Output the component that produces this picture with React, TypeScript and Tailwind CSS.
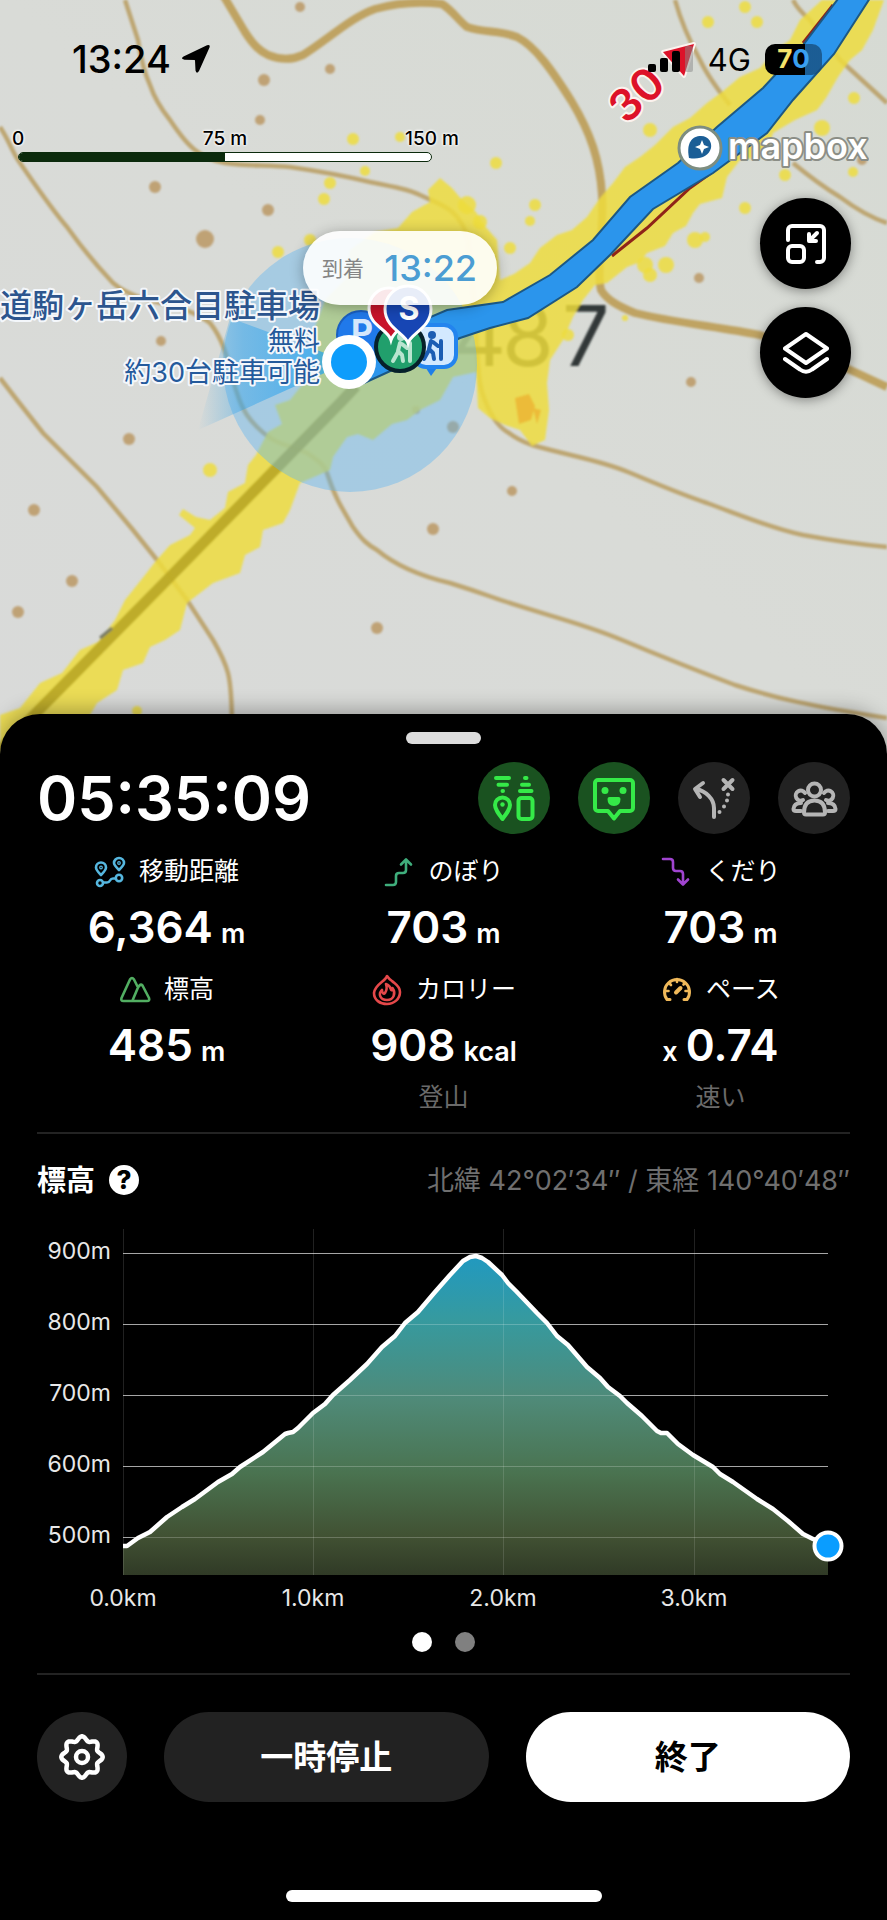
import React from "react";

type StatProps = {
  icon: React.ReactNode;
  label: string;
  value: string;
  unit?: string;
  prefix?: string;
  note?: string;
};

const contours = [
  "M0 127C10 142 12 152 20 163C36 186 50 207 67 227C82 248 97 266 113 283C140 306 180 300 210 323C228 345 230 375 237 393C243 412 250 420 257 427C266 436 272 440 280 443C294 449 302 449 310 455C320 462 325 466 327 473C334 495 340 505 353 527C362 540 368 545 377 550C395 565 420 576 450 583C466 588 478 592 492 597C540 614 580 622 622 640C665 658 695 670 735 685C775 698 810 706 887 718",
  "M125 0L138 40C141 60 144 72 150 85C155 100 162 110 170 120C180 135 186 143 195 150C205 158 213 161 225 163C245 166 268 165 290 167C318 171 345 176 370 182C395 187 410 190 420 195C435 202 443 205 450 210C462 220 466 230 468 240C474 290 476 340 479 375C480 390 483 396 486 403C492 418 500 428 509 433C518 440 524 442 532 445C566 455 600 460 628 472C657 484 680 494 707 503C740 515 770 528 803 535C830 540 855 544 887 547",
  "M0 378L17 400L43 433L97 487L133 530L157 560L187 600L213 640C220 652 225 662 228 673C231 685 232 700 232 730",
  "M675 0C682 25 690 42 700 60C708 77 718 90 730 105M793 163C810 177 825 188 840 197C856 209 872 218 887 223",
  "M793 0C797 8 803 14 810 20L840 60L887 103",
];

const yellowSpecks = [
  [353, 139, 6], [400, 137, 5], [365, 171, 5], [330, 183, 6], [324, 199, 6], [496, 163, 6], [650, 130, 7],
  [745, 7, 6], [757, 22, 6], [708, 22, 6], [854, 98, 6], [785, 175, 6], [853, 172, 5], [745, 208, 6],
  [535, 205, 6], [530, 221, 5], [510, 248, 6], [695, 240, 8], [705, 237, 5], [666, 265, 8], [650, 275, 7],
  [822, 128, 8], [210, 470, 7], [137, 711, 5], [467, 205, 9], [480, 222, 7], [310, 240, 6], [278, 252, 6],
  [568, 335, 6], [625, 318, 3], [645, 265, 8],
];

const brownDots = [
  [300, 7, 5], [264, 80, 6], [330, 69, 5], [260, 120, 5], [155, 187, 6], [268, 210, 6], [205, 239, 9],
  [161, 341, 5], [129, 439, 6], [34, 510, 6], [72, 581, 6], [18, 612, 6], [433, 529, 6], [377, 628, 6],
  [512, 491, 5], [699, 278, 5], [691, 382, 5], [862, 160, 5], [416, 410, 4], [453, 427, 6],
];

const profile =
  "86,326 90,326 101,318 113,312 130,297 145,287 158,279 181,262 195,254 203,247 226,232 248,214 251,213 256,212 261,208 276,193 288,184 296,175 313,160 330,144 345,127 358,116 368,103 381,92 398,72 413,55 426,41 433,37 439,36 445,38 451,42 465,55 471,63 479,71 500,93 510,103 520,116 531,125 550,147 563,158 571,167 583,176 590,183 605,196 620,211 624,213 630,213 641,224 656,235 676,247 683,254 696,262 720,279 736,289 751,301 766,314 776,319 791,326";

const gearPath =
  Array.from({ length: 96 }, (_, i) => {
    const a = (i / 96) * Math.PI * 2;
    const r = 18.6 + 2.1 * Math.cos(8 * a);
    const x = (23 + r * Math.sin(a)).toFixed(1);
    const y = (23 - r * Math.cos(a)).toFixed(1);
    return `${i ? "L" : "M"}${x} ${y}`;
  }).join("") + "Z";

function Hiker() {
  return (
    <g fill="none" strokeLinecap="round" strokeLinejoin="round" strokeWidth="4">
      <circle cx="0" cy="-11" r="2" />
      <path d="M-1 -5L-3 3L1 7L2 13M-3 4L-8 13M1 -4L6 0M9 -5V13" />
    </g>
  );
}

function TrailMap() {
  return (
    <svg
      className="absolute inset-0 h-full w-full"
      viewBox="0 0 887 760"
      preserveAspectRatio="xMidYMin slice"
      fontFamily="Inter, 'Noto Sans CJK JP', sans-serif"
      aria-label="登山ルートの地図"
      role="img"
    >
      <defs>
        <linearGradient id="land" x1="0" y1="1" x2="1" y2="0">
          <stop offset="0" stopColor="#d9dad9" />
          <stop offset="0.5" stopColor="#d9dbd7" />
          <stop offset="1" stopColor="#d6dad3" />
        </linearGradient>
        <linearGradient id="heading" x1="1" y1="0" x2="0" y2="0">
          <stop offset="0" stopColor="#149ff5" stopOpacity="0.75" />
          <stop offset="0.7" stopColor="#2aa0ea" stopOpacity="0.4" />
          <stop offset="1" stopColor="#2aa0ea" stopOpacity="0" />
        </linearGradient>
        <filter id="soft" x="-5%" y="-5%" width="110%" height="110%">
          <feGaussianBlur stdDeviation="1" />
        </filter>
      </defs>
      <rect width="887" height="760" fill="url(#land)" />
      <g filter="url(#soft)">
        <g fill="none" stroke="#bda672" strokeWidth="4.5">
          {contours.map((d) => (
            <path key={d} d={d} />
          ))}
        </g>
        <path
          d="M223 -5L245 32C254 46 260 51 268 55C280 60 292 60 303 55C330 38 350 18 375 9C400 2 425 2 442 4C452 10 458 20 467 27C485 33 500 30 517 37C535 46 552 70 572 102C590 132 600 160 602 195C604 230 596 270 601 290C607 300 618 306 635 313C670 322 720 327 760 335C810 350 850 370 887 387"
          fill="none"
          stroke="#bfa362"
          strokeWidth="8"
        />
        {brownDots.map(([x, y, r]) => (
          <circle key={`${x}-${y}`} cx={x} cy={y} r={r} fill="#b9935c" opacity="0.8" />
        ))}
        <text x="452 502 562" y="366" fontSize="84" fontWeight="400" fill="#333838">
          487
        </text>
        <g fill="#eedd3c" fillOpacity="0.84">
          <path d="M0 715L20 708L40 683L62 673L80 650L98 642L115 620L125 600L145 575L155 562L170 545L190 535L195 528L179 515L183 509L196 517L210 520L225 508L228 492L245 483L248 465L256 455L268 432L282 424L275 405L290 400L302 385L318 365L314 330L325 300L345 280L350 250L375 232L398 228L412 212L430 202L428 190L440 178L452 188L462 200L476 212L484 225L497 240L500 280L514 274L530 263L540 248L557 235L572 230L587 217L600 198L613 183L625 167L640 157L655 145L673 127L690 118L707 103L722 92L740 77L760 68L775 50L790 40L800 20L822 0H884L873 30L862 50L850 60L838 77L826 98L817 110L795 120L773 133L768 150L760 157L740 160L727 177L722 198L700 204L693 213L686 226L673 233L665 246L647 253L640 262L627 267L607 283L595 285L583 300L573 317L563 340L550 360L547 383L549 410L545 440L532 446L520 430L505 425L490 418L478 408L476 372L453 377L440 400L420 410L407 420L392 424L373 440L358 434L347 437L333 457L330 470L300 483L290 510L283 523L263 530L260 547L245 555L240 573L213 583L187 603L180 630L165 640L150 647L143 663L123 670L117 690L97 703L90 715L55 760H0Z" />
          {yellowSpecks.map(([x, y, r]) => (
            <circle key={`${x}-${y}`} cx={x} cy={y} r={r} />
          ))}
        </g>
        <path d="M515 398l14 -4l6 12l-4 14l-12 4zM533 408l8 2l-4 14z" fill="#eda92a" opacity="0.65" />
        <path d="M0 750L37 712L167 580L343 400L356 386" fill="none" stroke="#b09d1f" strokeOpacity="0.75" strokeWidth="11" />
        <path d="M100 638l12 -10" stroke="#777a66" strokeWidth="3" />
      </g>

      <circle cx="350" cy="365" r="127" fill="#5fb6f0" fillOpacity="0.42" />
      <path d="M349 362L230 318L198 430Z" fill="url(#heading)" />

      <path d="M833 5L803 43M718 168L690 188L647 228L612 256" fill="none" stroke="#8f2418" strokeWidth="3" />
      <path
        d="M841 -5L803 45L763 88L717 127L678 163L630 197L593 240L550 275L503 302L447 310L400 330L350 372L362 384L410 362L460 338L490 328L528 318L577 287L610 255L653 209L713 173L767 133L793 100L834 54L872 -5Z"
        fill="#2b95ec"
        stroke="#1c5884"
        strokeWidth="2"
      />

      <g fill="#dd1229" stroke="#fbf3ef" strokeWidth="4" paintOrder="stroke" strokeLinejoin="round">
        <path d="M663 52L694 44L684 76Z" />
        <text transform="translate(637 95) rotate(-43)" y="15" fontSize="44" fontWeight="600" textAnchor="middle">
          30
        </text>
      </g>

      <g stroke="#f4f7fb" strokeWidth="4" paintOrder="stroke" strokeLinejoin="round" textAnchor="end" fill="#245a9c">
        <text x="320" y="317" fontSize="32" fontWeight="500" fill="#2c558e">道駒ヶ岳六合目駐車場</text>
        <text x="320" y="350" fontSize="26">無料</text>
        <text x="320" y="382" fontSize="27">約30台駐車可能</text>
      </g>

      <circle cx="361" cy="335" r="24" fill="#2079ea" stroke="#1a5fc0" strokeWidth="2" />
      <text x="351" y="344" fontSize="34" fontWeight="700" fill="#d4e7fc">P</text>
      <path d="M424 365L431 376L439 365Z" fill="#1f7fe8" />
      <rect x="414" y="325" width="42" height="42" rx="12" fill="#d3e9ff" stroke="#2384ee" strokeWidth="4" />
      <g transform="translate(432 346)" stroke="#1c5db3" fill="#1c5db3">
        <Hiker />
      </g>
      <circle cx="400" cy="347" r="24" fill="#219f6c" stroke="#06202a" strokeWidth="4" />
      <g transform="translate(401 348)" stroke="#b9e5d0">
        <Hiker />
      </g>
      <path d="M391 340C388 329 369 326 369 308a20 20 0 0 1 40 0C409 326 394 330 391 340Z" fill="#c8142a" stroke="#fff" strokeWidth="3" />
      <path d="M408 343C405 333 385 328 385 309a23 23 0 0 1 46 0C431 328 411 333 408 343Z" fill="#1746b4" stroke="#fff" strokeWidth="3" />
      <text x="409" y="320" fontSize="32" fontWeight="700" textAnchor="middle" fill="#fff">S</text>
      <circle cx="349" cy="362" r="27" fill="#fff" />
      <circle cx="349" cy="362" r="18" fill="#0e9dfb" />
    </svg>
  );
}

function StatusBar() {
  return (
    <div className="relative flex h-[118px] items-center justify-between pr-[65px] pl-[72px]">
      <div className="flex items-center gap-[10px]">
        <span className="text-[38px] leading-none font-medium">13:24</span>
        <svg className="h-[30px] w-[30px]" viewBox="0 0 30 30" aria-hidden="true">
          <path d="M2.500 12.500L26 1.200Q29.500 0 28.500 3.500L18 27Q15.500 30.500 14.500 26.500L14 16.500Q14 16 13.500 16L3.500 15.700Q-1 15 2.500 12.500Z" />
        </svg>
      </div>
      <div className="flex items-center gap-[14px]">
        <svg className="h-[28px] w-[46px]" viewBox="0 0 46 28" aria-hidden="true">
          <rect x="0" y="19" width="8" height="8" rx="2" />
          <rect x="12" y="13" width="8" height="14" rx="2" />
          <rect x="24" y="6" width="8" height="21" rx="2" />
          <rect x="37" y="1" width="8" height="26" rx="2" fill="#8a8a8a" opacity="0.5" />
        </svg>
        <span className="text-[31px] leading-none">4G</span>
        <span className="flex h-[31px] w-[57px] items-center justify-center rounded-[10px] bg-linear-to-r from-black from-70% to-[#164a77]/75 to-70% text-[26px] leading-none font-bold">
          <span className="text-[#f5e36b]">7</span>
          <span className="text-[#3aa0f0]">0</span>
        </span>
      </div>
    </div>
  );
}

function ScaleBar() {
  return (
    <div className="ml-[18px] flex w-[414px] flex-col gap-[3px] pt-[11px]">
      <div className="flex h-5 items-center justify-between text-[19px] leading-5 font-medium whitespace-nowrap text-black [text-shadow:0_0_3px_#fff,0_0_3px_#fff,0_0_2px_#fff]">
        <span className="flex w-0 justify-center">0</span>
        <span className="flex w-0 justify-center">75 m</span>
        <span className="flex w-0 justify-center">150 m</span>
      </div>
      <div className="flex h-[10px] overflow-hidden rounded-full border border-[#0b2a0c] bg-white">
        <div className="w-1/2 bg-[#0b2a0c]" />
      </div>
    </div>
  );
}

function MapboxLogo() {
  return (
    <svg className="mr-[18px] h-[60px] w-[194px]" viewBox="0 0 194 60" role="img" aria-label="mapbox">
      <circle cx="25" cy="30" r="21" fill="#fff" stroke="#7d8d80" strokeWidth="3" />
      <path d="M14 40C11 25 17 18 26 18C34 18 37 25 36 30C34 38 25 42 14 40Z" fill="#1b5e96" />
      <path d="M27 22L29 27L34 29L29 31L27 36L25 31L20 29L25 27Z" fill="#fff" />
      <text
        x="53"
        y="41"
        fontFamily="Inter, sans-serif"
        fontSize="36"
        fontWeight="600"
        fill="#fff"
        stroke="#8b8e86"
        strokeWidth="4"
        paintOrder="stroke"
        strokeLinejoin="round"
      >
        mapbox
      </text>
    </svg>
  );
}

function MapButton({ label, children }: { label: string; children: React.ReactNode }) {
  return (
    <button
      type="button"
      aria-label={label}
      className="flex h-[91px] w-[91px] items-center justify-center rounded-full bg-black shadow-[0_2px_12px_rgba(0,0,0,0.4)]"
    >
      {children}
    </button>
  );
}

function RoundToggle({ label, active, children }: { label: string; active?: boolean; children: React.ReactNode }) {
  return (
    <button
      type="button"
      aria-label={label}
      aria-pressed={!!active}
      className={
        active
          ? "flex h-[72px] w-[72px] items-center justify-center rounded-full bg-[#1a5220] text-[#35ea48]"
          : "flex h-[72px] w-[72px] items-center justify-center rounded-full bg-[#222222] text-[#b5b5b5]"
      }
    >
      <svg
        className="h-11 w-11 overflow-visible"
        viewBox="0 0 44 44"
        fill="none"
        stroke="currentColor"
        strokeWidth="4"
        strokeLinecap="round"
        strokeLinejoin="round"
        aria-hidden="true"
      >
        {children}
      </svg>
    </button>
  );
}

function StatIcon({ className, children }: { className: string; children: React.ReactNode }) {
  return (
    <svg
      className={`h-[30px] w-[30px] overflow-visible ${className}`}
      viewBox="0 0 30 30"
      fill="none"
      stroke="currentColor"
      strokeWidth="2.6"
      strokeLinecap="round"
      strokeLinejoin="round"
      aria-hidden="true"
    >
      {children}
    </svg>
  );
}

function Stat({ icon, label, value, unit, prefix, note }: StatProps) {
  return (
    <div className="flex flex-col items-center">
      <dt className="flex h-[50px] items-center gap-[14px] pt-px pl-px text-[25px] leading-none">
        {icon}
        {label}
      </dt>
      <dd className="flex h-[60px] items-baseline gap-2 text-[44px] leading-[62px] font-semibold">
        {prefix && <span className="text-[27px]">{prefix}</span>}
        {value}
        {unit && <span className="text-[27px]">{unit}</span>}
      </dd>
      {note && <dd className="flex h-[46px] items-center text-[25px] leading-none text-[#6a6a6a]">{note}</dd>}
    </div>
  );
}

function ElevationChart() {
  const rows = [
    ["900m", 33],
    ["800m", 104],
    ["700m", 175],
    ["600m", 246],
    ["500m", 317],
  ] as const;
  const cols = [
    ["0.0km", 86],
    ["1.0km", 276],
    ["2.0km", 466],
    ["3.0km", 657],
  ] as const;
  return (
    <svg
      className="w-full overflow-visible"
      viewBox="0 0 813 395"
      fontFamily="Inter, sans-serif"
      fontSize="23"
      fill="#e8e8e8"
      role="img"
      aria-label="標高グラフ"
    >
      <defs>
        <linearGradient id="slope" gradientUnits="userSpaceOnUse" x1="0" y1="36" x2="0" y2="355">
          <stop offset="0" stopColor="#2199c0" />
          <stop offset="0.2" stopColor="#369a9f" />
          <stop offset="0.45" stopColor="#4f8a78" />
          <stop offset="0.68" stopColor="#4a7350" />
          <stop offset="0.88" stopColor="#415133" />
          <stop offset="1" stopColor="#303a26" />
        </linearGradient>
      </defs>
      {rows.map(([label, y]) => (
        <g key={label}>
          <path d={`M86 ${y + 0.5}H791`} stroke="#8e8e8e" strokeWidth="1" />
          <text x="74" y={y + 6} textAnchor="end">
            {label}
          </text>
        </g>
      ))}
      <polygon points={`86,355 ${profile} 791,355`} fill="url(#slope)" />
      {rows.map(([label, y]) => (
        <path key={label} d={`M86 ${y + 0.5}H791`} stroke="#ffffff" strokeOpacity="0.22" strokeWidth="1" />
      ))}
      {cols.map(([label, x]) => (
        <g key={label}>
          <path d={`M${x + 0.5} 9V355`} stroke="#ffffff" strokeOpacity="0.13" strokeWidth="1" />
          <text x={x} y="386" textAnchor="middle">
            {label}
          </text>
        </g>
      ))}
      <polyline points={profile} fill="none" stroke="#ffffff" strokeWidth="4.5" strokeLinejoin="round" />
      <circle cx="791" cy="326" r="13.5" fill="#0a9dff" stroke="#ffffff" strokeWidth="4" />
    </svg>
  );
}

export default function App() {
  return (
    <main className="min-h-screen overflow-x-hidden bg-black font-[Inter,'Noto_Sans_CJK_JP',sans-serif] text-white" lang="ja">
      <section className="relative min-h-[760px] overflow-hidden text-black">
        <TrailMap />
        <StatusBar />
        <div className="relative flex h-[60px] items-start justify-between">
          <ScaleBar />
          <MapboxLogo />
        </div>
        <div className="relative flex flex-col items-end gap-[18px] pt-5 pr-9">
          <MapButton label="地図を縮小">
            <svg className="h-10 w-10" viewBox="0 0 40 40" fill="none" stroke="#fff" strokeWidth="4" strokeLinecap="round" strokeLinejoin="round" aria-hidden="true">
              <path d="M2 16V6a4 4 0 0 1 4-4H34a4 4 0 0 1 4 4V34a4 4 0 0 1-4 4H31" />
              <rect x="2" y="22" width="16" height="16" rx="4" />
              <path d="M31 9L24 16M23 10V17H30" />
            </svg>
          </MapButton>
          <MapButton label="地図レイヤー">
            <svg className="h-[42px] w-[46px]" viewBox="0 0 46 42" fill="none" stroke="#fff" strokeWidth="4" strokeLinecap="round" strokeLinejoin="round" aria-hidden="true">
              <path d="M23 2L44 16.5L23 31L2 16.5Z" />
              <path d="M2 27L17 37.500Q23 42 29 37.500L44 27" />
            </svg>
          </MapButton>
        </div>
        <div className="absolute top-[231px] left-[303px] flex h-[74px] w-[194px] items-center justify-between rounded-full bg-white/90 pr-5 pl-[19px] shadow-[0_2px_14px_rgba(0,0,0,0.3)]">
          <span className="text-[21px] leading-none text-[#858585]">到着</span>
          <span className="text-[36px] leading-none font-medium text-[#4b9dd3]">13:22</span>
        </div>
      </section>

      <section className="relative -mt-[46px] flex flex-col rounded-t-[40px] bg-black pt-[18px] shadow-[0_-4px_20px_rgba(0,0,0,0.3)]">
        <div className="mx-auto h-3 w-[75px] rounded-full bg-[#dcdcdc]" />

        <div className="mt-[18px] flex items-center justify-between px-[37px]">
          <time className="text-[61px] leading-none font-semibold">05:35:09</time>
          <div className="flex gap-7">
            <RoundToggle label="スポット表示" active>
              <path d="M4 2H17M6.500 8.700H15M10.500 15H11" />
              <path d="M10.500 43C6 37 3 33 3 29a7.500 7.500 0 0 1 15 0C18 33 15 37 10.500 43Z" />
              <circle cx="10.500" cy="28.500" r="2.200" fill="currentColor" stroke="none" />
              <path d="M33 2H34.500M30 8.700H37M28 15H39.500" />
              <rect x="26.500" y="22" width="14" height="21" rx="3" />
            </RoundToggle>
            <RoundToggle label="フィールドメモ" active>
              <path d="M6 4H38a3 3 0 0 1 3 3V32a3 3 0 0 1-3 3H28L22 42.500L16 35H6a3 3 0 0 1-3-3V7a3 3 0 0 1 3-3Z" />
              <circle cx="13" cy="14.500" r="3.500" fill="currentColor" stroke="none" />
              <circle cx="31" cy="14.500" r="3.500" fill="currentColor" stroke="none" />
              <path d="M17.500 23H26.500Q26.500 28 22 28Q17.500 28 17.500 23Z" fill="currentColor" />
            </RoundToggle>
            <RoundToggle label="ルート外れ警告">
              <path d="M22 41V32C22 23 14 15 4 13M11 7L3 13L8 21" />
              <path d="M31.500 4L40.500 13M40.500 4L31.500 13" />
              <path d="M36 18.500V18.510M35 24.500V24.510M32 30.500V30.510M27.500 36V36.010" />
            </RoundToggle>
            <RoundToggle label="みまもり">
              <circle cx="22.500" cy="14" r="6.500" />
              <path d="M12 36.500C12 29 15 24.500 22.500 24.500S33 29 33 36.500Q33 38.500 31 38.500H14Q12 38.500 12 36.500Z" />
              <path d="M11 24A5 5 0 1 1 13 17M34 24A5 5 0 1 0 32 17" />
              <path d="M9 27Q2 27 1.500 33Q1.500 35 4 35H9M36 27Q43 27 43.500 33Q43.500 35 41 35H36" />
            </RoundToggle>
          </div>
        </div>

        <dl className="mt-3 grid grid-cols-3 gap-y-2 px-7">
          <Stat
            label="移動距離"
            value="6,364"
            unit="m"
            icon={
              <StatIcon className="text-[#56b7df]">
                <path d="M6 18C3 15 1 13 1 10.500a5 5 0 0 1 10 0C11 13 9 15 6 18ZM24 13C21 10 19 8 19 6a5 5 0 0 1 10 0C29 8 27 10 24 13Z" />
                <circle cx="6" cy="10.500" r="0.600" />
                <circle cx="24" cy="6" r="0.600" />
                <circle cx="5" cy="26" r="3" />
                <circle cx="24" cy="21" r="3.200" />
                <path d="M9 25.500H12Q14 25.500 15 23.500T18 21.500H20" />
              </StatIcon>
            }
          />
          <Stat
            label="のぼり"
            value="703"
            unit="m"
            icon={
              <StatIcon className="text-[#3fae7c]">
                <path d="M2 28H9Q12 28 12 25V19Q12 16 15 16H19Q22 16 22 13V3M17 7.500L22 2.500L27 7.500" />
              </StatIcon>
            }
          />
          <Stat
            label="くだり"
            value="703"
            unit="m"
            icon={
              <StatIcon className="text-[#a044d0]">
                <path d="M2 2H9Q12 2 12 5V11Q12 14 15 14H19Q22 14 22 17V27M17 22.500L22 27.500L27 22.500" />
              </StatIcon>
            }
          />
          <Stat
            label="標高"
            value="485"
            unit="m"
            icon={
              <StatIcon className="text-[#52ae62]">
                <path d="M1.500 23L10 4.500Q12 1.500 14 4.500L18 12.500L19.500 10.500Q21 9 22.500 10.500L29 23Q30 26 27 26H3.500Q0.500 26 1.500 23ZM18 12.500L12.500 25.500" />
              </StatIcon>
            }
          />
          <Stat
            label="カロリー"
            value="908"
            unit="kcal"
            note="登山"
            icon={
              <StatIcon className="text-[#e5484a]">
                <path d="M15 1C13 7 3 9 2 18C2 25 8 29 15 29S28 24 28 17C28 11 23 9 20 6Q17 4 15 1Z" />
                <path d="M14 9C20 11 18 16 20 15Q21 14 20.500 13C24 18 22 25 15 25S6 19 10 15C10 18 12 20 13 18C15 15 15 12 14 9Z" />
              </StatIcon>
            }
          />
          <Stat
            label="ペース"
            value="0.74"
            prefix="x"
            note="速い"
            icon={
              <StatIcon className="text-[#f0b95a]">
                <path d="M8 24.500H5A12.500 12.500 0 1 1 25 24.500H22" strokeWidth="3" />
                <path d="M15 4V7M7.500 8.500L9 10M22.500 8.500L21.500 9.500M4 16H6.500M26 16H23.500" />
                <path d="M14 17.500L18.500 13" strokeWidth="4" />
              </StatIcon>
            }
          />
        </dl>

        <div className="mx-[37px] mt-3 flex flex-col border-y-2 border-[#232323]">
          <div className="flex h-[86px] items-center justify-between pt-[6px]">
            <div className="flex items-center gap-[14px]">
              <h2 className="text-[29px] leading-none font-bold">標高</h2>
              <button
                type="button"
                aria-label="標高について"
                className="flex h-[30px] w-[30px] items-center justify-center rounded-full bg-white text-[26px] leading-none font-extrabold text-black"
              >
                ?
              </button>
            </div>
            <p className="text-[27px] leading-none text-[#6f6f6f]">北緯 42°02′34″ / 東経 140°40′48″</p>
          </div>
          <ElevationChart />
          <div className="flex h-[58px] items-center justify-center gap-[23px] pb-1">
            <span className="h-5 w-5 rounded-full bg-white" />
            <span className="h-5 w-5 rounded-full bg-[#808080]" />
          </div>
        </div>

        <div className="mt-[37px] flex gap-[37px] px-[37px]">
          <button type="button" aria-label="設定" className="flex h-[90px] w-[90px] shrink-0 items-center justify-center rounded-full bg-[#222222]">
            <svg className="h-[46px] w-[46px]" viewBox="0 0 46 46" fill="none" stroke="#fff" strokeWidth="4.5" strokeLinejoin="round" aria-hidden="true">
              <path d={gearPath} />
              <circle cx="23" cy="23" r="6" />
            </svg>
          </button>
          <button type="button" className="h-[90px] flex-1 rounded-full bg-[#222222] text-[33px] leading-none font-bold">
            一時停止
          </button>
          <button type="button" className="h-[90px] flex-1 rounded-full bg-white text-[33px] leading-none font-bold text-black">
            終了
          </button>
        </div>

        <div className="mx-auto mt-[88px] mb-[18px] h-3 w-[316px] rounded-full bg-white" />
      </section>
    </main>
  );
}
